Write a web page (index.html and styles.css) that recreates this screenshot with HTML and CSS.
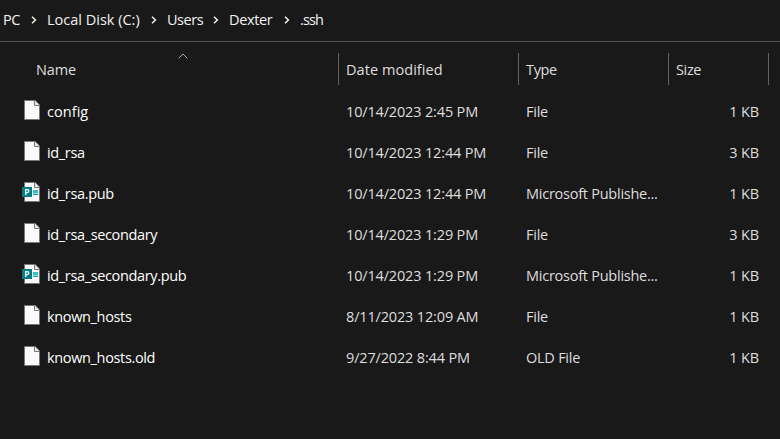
FILE: index.html
```
<!DOCTYPE html>
<html lang="en">
<head>
<meta charset="utf-8">
<title>.ssh</title>
<link rel="stylesheet" href="styles.css">
</head>
<body>
<svg class="defs" width="0" height="0" aria-hidden="true">
  <symbol id="chevron" viewBox="0 0 6 8"><path d="M1 .8 4.4 4 1 7.2" fill="none" stroke="#f2f2f2" stroke-width="1.5"/></symbol>
  <symbol id="file" viewBox="0 0 18 20"><path d="M2.5.5h10.6l4.4 4.4v14.6h-15z" fill="#fafafa" stroke="#777"/><path d="M12.5.5v5h5" fill="#e8e8e8" stroke="#777"/></symbol>
  <symbol id="publisher" viewBox="0 0 18 20"><use href="#file"/><path d="M11 8h5v3.5h-5z" fill="#32c2ce"/><path d="M11 12h5v1h-5z" fill="#119ba3"/><path d="M0 5h10v10H0z" fill="#077c82"/><path d="M3.7 13V7.6h1.6a1.5 1.5 0 0 1 0 3H3.7" fill="none" stroke="#fff" stroke-width="1.3"/></symbol>
</svg>
<nav class="breadcrumb">
  <span class="crumb pc">PC</span><svg class="chevron"><use href="#chevron"/></svg>
  <span class="crumb disk">Local Disk (C:)</span><svg class="chevron"><use href="#chevron"/></svg>
  <span class="crumb users">Users</span><svg class="chevron"><use href="#chevron"/></svg>
  <span class="crumb dexter">Dexter</span><svg class="chevron"><use href="#chevron"/></svg>
  <span class="crumb ssh">.ssh</span>
</nav>
<main>
  <header class="columns head">
    <div class="heading name-heading"><span class="t-name">Name</span><svg class="sort" viewBox="0 0 10 6"><path d="M.7 5.3 5 1l4.3 4.3" fill="none" stroke="#aaa"/></svg></div>
    <div class="heading"><span class="t-date">Date modified</span></div>
    <div class="heading"><span class="t-type">Type</span></div>
    <div class="heading"><span class="t-size">Size</span></div>
  </header>
  <div class="columns row"><div class="name"><svg class="icon"><use href="#file"/></svg><span class="short">config</span></div><div class="date">10/14/2023 2:45 PM</div><div class="type">File</div><div class="size">1 KB</div></div>
  <div class="columns row"><div class="name"><svg class="icon"><use href="#file"/></svg><span>id_rsa</span></div><div class="date">10/14/2023 12:44 PM</div><div class="type">File</div><div class="size">3 KB</div></div>
  <div class="columns row"><div class="name"><svg class="icon"><use href="#publisher"/></svg><span>id_rsa.pub</span></div><div class="date">10/14/2023 12:44 PM</div><div class="type">Microsoft Publishe...</div><div class="size">1 KB</div></div>
  <div class="columns row"><div class="name"><svg class="icon"><use href="#file"/></svg><span>id_rsa_secondary</span></div><div class="date">10/14/2023 1:29 PM</div><div class="type">File</div><div class="size">3 KB</div></div>
  <div class="columns row"><div class="name"><svg class="icon"><use href="#publisher"/></svg><span>id_rsa_secondary.pub</span></div><div class="date">10/14/2023 1:29 PM</div><div class="type">Microsoft Publishe...</div><div class="size">1 KB</div></div>
  <div class="columns row"><div class="name"><svg class="icon"><use href="#file"/></svg><span>known_hosts</span></div><div class="date">8/11/2023 12:09 AM</div><div class="type">File</div><div class="size">1 KB</div></div>
  <div class="columns row"><div class="name"><svg class="icon"><use href="#file"/></svg><span>known_hosts.old</span></div><div class="date">9/27/2022 8:44 PM</div><div class="type">OLD File</div><div class="size">1 KB</div></div>
</main>
</body>
</html>
```
FILE: styles.css
```
* { box-sizing: border-box; }
body {
  margin: 0;
  height: 439px;
  overflow: hidden;
  background: #191919;
  color: #dedede;
  font: 14.5px/20px "Open Sans", "Noto Sans", sans-serif;
  letter-spacing: -0.35px;
  white-space: nowrap;
}
.defs { position: absolute; }
.breadcrumb {
  display: flex;
  align-items: center;
  height: 42px;
  padding: 0 0 2px 3px;
  border-bottom: 1px solid #535353;
  color: #f2f2f2;
}
.chevron { width: 6px; height: 8px; margin-right: 10px; flex: none; }
.crumb { flex: none; }
.pc { width: 28px; }
.disk { width: 104px; letter-spacing: 0; }
.users { width: 46px; letter-spacing: -0.45px; }
.dexter { width: 55px; }
.ssh { letter-spacing: -0.85px; }
.columns {
  display: grid;
  grid-template-columns: 339px 180px 150px 100px;
}
.head { height: 49px; padding-top: 11px; }
.heading {
  display: flex;
  align-items: center;
  height: 32px;
  padding: 2px 0 0 7px;
  border-right: 1px solid #636363;
}
.name-heading { position: relative; padding-left: 36px; }
.t-name { letter-spacing: -0.15px; }
.t-date { letter-spacing: 0.06px; }
.sort { position: absolute; left: 178px; top: 0; width: 10px; height: 6px; }
.row { height: 41px; align-items: center; }
.name { display: flex; align-items: center; padding-left: 22px; color: #fff; }
.short { letter-spacing: 0.05px; }
.icon { width: 18px; height: 20px; margin: 0 7px 3px 0; flex: none; }
.date, .type { padding-left: 7px; }
.date { letter-spacing: -0.16px; }
.type { letter-spacing: -0.25px; }
.size { padding-right: 10px; text-align: right; letter-spacing: -0.15px; }
```
